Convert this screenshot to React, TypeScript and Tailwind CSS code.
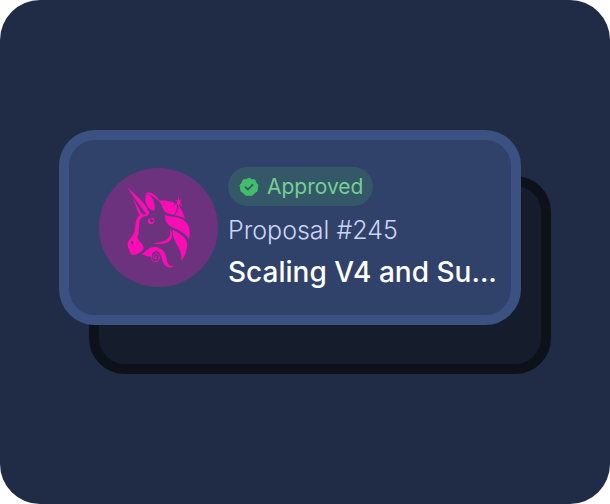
import type { ReactNode } from "react";

interface Proposal {
  id: number;
  title: string;
  status: string;
}

const PROPOSAL: Proposal = { id: 245, title: "Scaling V4 and Su...", status: "Approved" };

function UnicornLogo() {
  return (
    <svg viewBox="10 9 357 357" className="size-[119px] shrink-0" role="img" aria-label="Uniswap">
      <circle cx="188.5" cy="187.5" r="178.5" fill="#6c327e" />
      <g fill="#fb0cb4">
        {/* horn */}
        <path d="M95 67 C112 82 143 112 154 128 C160 137 160 145 152 148 C144 137 120 106 95 67 Z" />
        {/* face and muzzle */}
        <path d="M112 99 C120 113 130 131 136 143 C142 149 149 150 155 143 L160 137 C162 147 158 152 150 154 C137 156 132 163 131 175 C129 193 131 205 125 217 C128 229 141 235 144 249 C143 255 138 259 133 262 C126 267 118 271 109 270 C104 266 102 259 98 250 C94 239 95 229 103 222 C112 213 116 203 118 191 C121 177 118 163 132 151 C127 141 118 119 112 99 Z" />
        {/* ear */}
        <path d="M151 89 C147 100 149 113 155 123 C159 131 167 137 176 137 C179 126 176 108 167 96 C162 91 157 88 151 89 Z" />
        <path d="M150 88 C151 81 163 82 171 86 C183 92 191 103 196 116 C187 104 173 92 160 89 C156 88 153 87 150 88 Z" />
        {/* forelock */}
        <path d="M190 108 C207 105 224 108 235 114 C243 118 246 124 247 132 C247 140 244 145 239 149 C231 149 218 148 209 141 C199 133 202 121 190 108 Z" />
        <path d="M250 123 C257 133 264 145 268 161 C258 155 248 153 236 151 C245 144 249 137 250 123 Z" />
        {/* mane */}
        <path d="M207 149 C220 155 234 154 248 158 C265 162 279 176 281 192 C283 202 282 213 280 222 C275 213 267 206 257 200 C242 190 226 189 216 177 C209 168 208 158 207 149 Z" />
        <path d="M231 194 C242 200 255 206 264 216 C273 225 276 235 274 245 C272 262 266 276 257 287 C257 273 256 260 249 248 C239 230 229 214 231 194 Z" />
        {/* jaw */}
        <path d="M223 191 C230 200 232 213 226 223 C217 237 198 238 173 236 C190 231 206 231 216 221 C224 213 225 204 223 191 Z" />
        {/* beard */}
        <path d="M138 268 C147 263 156 251 168 247 C182 243 198 249 206 262 C214 275 211 290 220 300 C224 304 230 304 236 302 C228 310 215 309 207 300 C197 288 199 266 187 260 C177 256 169 262 167 275 C157 277 149 271 138 268 Z" />
        {/* eye */}
        <path d="M156 167 C158 160 166 158 173 158 C178 164 177 174 170 177 C163 179 156 174 156 167 Z" />
      </g>
      <path
        d="M168 272 C166 285 173 290 180 290 C187 290 191 284 191 277 C191 269 185 265 180 266 C174 267 172 275 175 280 C178 284 185 281 183 276 C182 274 180 274 179 276"
        fill="none"
        stroke="#fb0cb4"
        strokeWidth="3"
        strokeLinecap="round"
      />
      <circle cx="168" cy="166" r="5.5" fill="#6c327e" />
      <circle cx="170" cy="163" r="2" fill="#fb0cb4" />
      <path d="M106 228 C113 227 115 234 110 240 C108 236 106 234 106 228 Z" fill="#6c327e" />
      {/* sparkle */}
      <path
        d="M245 120 C246 131 243 142 236 150 M241 110 L235 124"
        fill="none"
        stroke="#6c327e"
        strokeWidth="3"
      />
      <path
        d="M247 90 L251 107 L259 98 L253 112 L262 127 L251 116 L251 150 L247 117 L237 124 L246 111 L236 104 L247 107 Z"
        fill="#fb0cb4"
      />
    </svg>
  );
}

function VerifiedIcon() {
  return (
    <svg viewBox="0 0 20 20" className="size-5 shrink-0" aria-hidden="true">
      <path
        d="M10 1 L12.7 2.5 L15.8 2.9 L17 5.8 L19 8.2 L18.4 11 L18 14.2 L15.4 15.9 L13.3 18.3 L10 18.2 L6.7 18.3 L4.6 15.9 L2 14.2 L1.6 11 L1 8.2 L3 5.8 L4.2 2.9 L7.3 2.5 Z"
        fill="#42bd6b"
        stroke="#42bd6b"
        strokeLinejoin="round"
      />
      <path
        d="M6.5 10.2 L9 12.5 L13.5 7.8"
        fill="none"
        stroke="#345868"
        strokeWidth="1.8"
        strokeLinecap="round"
        strokeLinejoin="round"
      />
    </svg>
  );
}

function StatusBadge({ children }: { children: ReactNode }) {
  return (
    <span className="flex h-[39px] items-center gap-2 rounded-full bg-[#345868] pr-[10px] pl-[11px] text-[21px] text-[#75cf91]">
      <VerifiedIcon />
      {children}
    </span>
  );
}

function ProposalCard({ proposal }: { proposal: Proposal }) {
  return (
    <article className="relative flex items-center gap-[10px] rounded-[36px] border-[10px] border-[#3b5182] bg-[#30426a] py-[27px] pl-[30px]">
      <UnicornLogo />
      <div className="flex min-w-0 flex-1 flex-col items-start whitespace-nowrap">
        <StatusBadge>{proposal.status}</StatusBadge>
        <p className="mt-2 text-[25px] leading-8 font-light text-[#cdd5f5]">Proposal #{proposal.id}</p>
        <h2 className="mt-[10px] text-[28px] leading-8 font-medium text-white">{proposal.title}</h2>
      </div>
    </article>
  );
}

export default function App() {
  return (
    <main className="flex min-h-screen flex-col justify-center rounded-[40px] bg-[#202c46] px-[59px] font-['Inter',sans-serif]">
      <div className="relative pr-[30px] pb-[49px]">
        {/* second card of the stack */}
        <div className="absolute top-[46px] right-0 bottom-0 left-[30px] rounded-[36px] border-[10px] border-[#0d1119] bg-[#151c2c]" />
        <ProposalCard proposal={PROPOSAL} />
      </div>
    </main>
  );
}
